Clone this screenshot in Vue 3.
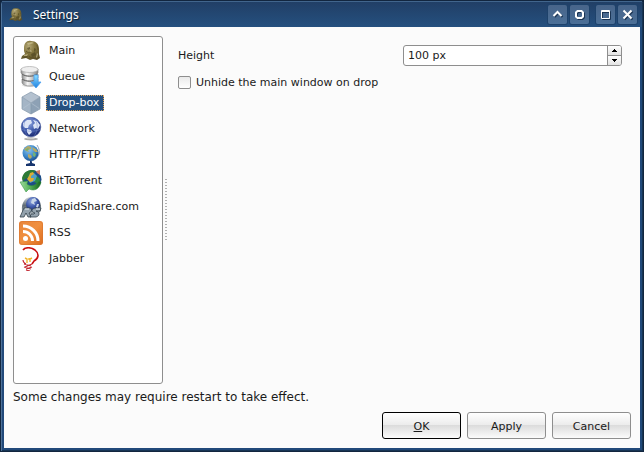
<script setup>
import { ref } from 'vue'

const pages = [
  { id: 'main', label: 'Main' },
  { id: 'queue', label: 'Queue' },
  { id: 'dropbox', label: 'Drop-box' },
  { id: 'network', label: 'Network' },
  { id: 'http', label: 'HTTP/FTP' },
  { id: 'torrent', label: 'BitTorrent' },
  { id: 'rapid', label: 'RapidShare.com' },
  { id: 'rss', label: 'RSS' },
  { id: 'jabber', label: 'Jabber' },
]
const current = ref('dropbox')
const height = ref(100)
const unhide = ref(false)
</script>

<template>
  <div class="window">
    <svg class="defs" width="0" height="0" aria-hidden="true">
      <defs>
        <radialGradient id="bronze" cx=".4" cy=".3" r=".75">
          <stop offset="0" stop-color="#b3a777" /><stop offset=".45" stop-color="#85773f" /><stop offset="1" stop-color="#5a4e25" />
        </radialGradient>
        <linearGradient id="disk"><stop offset="0" stop-color="#8d8d8d" /><stop offset=".35" stop-color="#f6f6f6" /><stop offset="1" stop-color="#858585" /></linearGradient>
        <linearGradient id="arrow" x2="0" y2="1"><stop offset="0" stop-color="#8fe0ff" /><stop offset="1" stop-color="#1b7fe0" /></linearGradient>
        <linearGradient id="leaf" x2="1" y2="0"><stop offset="0" stop-color="#9fdc9f" /><stop offset=".45" stop-color="#58b45a" /><stop offset="1" stop-color="#14641f" /></linearGradient>
        <radialGradient id="navy" cx=".4" cy=".3" r=".7"><stop offset="0" stop-color="#8fa6e0" /><stop offset=".6" stop-color="#3d57a8" /><stop offset="1" stop-color="#1c2a70" /></radialGradient>
        <radialGradient id="sea" cx=".4" cy=".3" r=".75"><stop offset="0" stop-color="#8cc4ee" /><stop offset=".6" stop-color="#3a86c8" /><stop offset="1" stop-color="#1a4b8c" /></radialGradient>
        <linearGradient id="orange" x2="1" y2="1"><stop offset="0" stop-color="#e8853a" /><stop offset=".5" stop-color="#f09040" /><stop offset="1" stop-color="#dc6a1c" /></linearGradient>
        <linearGradient id="chrome" x2="0" y2="1"><stop offset="0" stop-color="#d9dee2" /><stop offset=".5" stop-color="#5f6b74" /><stop offset="1" stop-color="#a9b4bb" /></linearGradient>
        <symbol id="i-main" viewBox="0 0 24 24">
          <path fill="url(#bronze)" d="M5 9C5 4 8 1 12 2c5 0 8 3 8 8v5l1 4-3 2-4-1-3 1-4-2-5 1 1-3 3-2-1-3z" />
          <path fill="#4b421f" opacity=".6" d="M8 9l3-1 0 2-2 1zM15 9l2 1-1 3-1-1zM12 15l4-2 1 3-4 2zM4 18l4-1 1 1-4 1z" />
          <path fill="#cfc496" opacity=".7" d="M8 4l5-1 2 1-6 2zM18 14l1 1-1 4-1-1zM5 16l4-1-1 2-3 0zM11 11l2 1-2 2z" />
          <path fill="none" stroke="#5b5027" stroke-width=".8" d="M7 12c2 2 3 2 5 1m-2 4c1 2 3 2 5 1M18 6l1 5" />
        </symbol>
        <symbol id="i-queue" viewBox="0 0 24 24">
          <ellipse cx="11" cy="20" rx="8" ry="2" fill="#aaa" opacity=".4" />
          <g fill="url(#disk)" stroke="#8b8b8b" stroke-width=".7">
            <path d="M3 14v4c2 4 14 4 16 0v-4z" /><path d="M3 9v4c2 4 14 4 16 0V9z" /><path d="M2 4v4c2 4 15 4 17 0V4z" />
          </g>
          <ellipse cx="10.500" cy="4.500" rx="8.500" ry="3" fill="#eee" stroke="#aaa" stroke-width=".7" />
          <path d="M3 9c4 3 11 3 15 0M3 14c4 3 11 3 15 0" fill="none" stroke="#666" />
          <path d="M15 10h4v7h3l-5 6-5-6h3z" fill="url(#arrow)" stroke="#4a9ff0" stroke-width=".8" />
        </symbol>
        <symbol id="i-dropbox" viewBox="0 0 24 24">
          <path d="M12 1l9 5-9 6-9-6z" fill="#b4c1cf" /><path d="M3 6l9 6v11l-9-5z" fill="#a4b5c6" /><path d="M21 6l-9 6v11l9-5z" fill="#8da1b5" />
          <path d="M3 18l9-6 9 6M12 1v11" fill="none" stroke="#b7c6d3" stroke-width=".6" />
          <path d="M12 1l9 5v12l-9 5-9-5V6zM3 6l9 6 9-6M12 12v11" fill="none" stroke="#8598aa" stroke-width=".7" />
        </symbol>
        <symbol id="i-network" viewBox="0 0 24 24">
          <ellipse cx="12" cy="22" rx="7" ry="1.500" fill="#aaa" /><path d="M9 20h5l2 2H7z" fill="#ccc" />
          <circle cx="12" cy="10" r="9.800" fill="url(#navy)" stroke="#40549a" stroke-width=".6" />
          <path fill="#dde5f6" d="M4 6l4-3 4 0 1 3-3 2-1 3-3 0-2-2zM14 3l4 1 3 4-2 4-2-1-2 1-1-4 2-2zM8 12l4 1 1 2-3 3-2-3z" />
          <path d="M4 5c4-4 12-4 16 0M2 12c6 3 14 3 20 0M7 2C3 9 5 15 9 19M16 2c4 7 2 13-1 17" fill="none" stroke="#7188c8" stroke-width=".5" />
        </symbol>
        <symbol id="i-http" viewBox="0 0 24 24">
          <path d="M11 17h2l0 3 3 1v2H7v-2l4-1z" fill="#17356e" /><path d="M18 2c5 7 1 15-6 16" fill="none" stroke="#95a9bd" />
          <circle cx="11.500" cy="10" r="8" fill="url(#sea)" />
          <path fill="#b5a866" d="M5 6l4-3 3 1 0 2-3 1 1 2-3-1zM13 4l4 2 2 3-3 0-2-2zM9 11l3 1 1 2-2 2-2-2z" />
          <path fill="#73b277" d="M6 7l3-2 1 1-2 2zM14 9l3 2-1 3-2-1z" />
        </symbol>
        <symbol id="i-torrent" viewBox="0 0 24 24">
          <circle cx="13" cy="10.500" r="9.500" fill="#1d4c86" />
          <path d="M3 9C5 1 13 0 17 2l-4 3-4 4-3 1-2 3z" fill="#2d7a36" />
          <path d="M17 6l4 4-1 5-5-2z" fill="#2a8b46" />
          <path d="M10 6l5-2 3 3-2 5-5 2-2-4z" fill="#4f9fc8" />
          <path d="M11 4l3-1 1 2-3 2 0 2 3 0-1 3-3 1-3-3 2-3z" fill="#dcae34" />
          <path d="M17 2l4-1 0 5-3-2z" fill="#d07a62" />
          <path d="M1 13l8-1-1 3c4 3 8 2 12-3l2 1c-1 6-6 10-12 7l-3 3z" fill="url(#leaf)" stroke="#2d8a3a" stroke-width=".5" />
        </symbol>
        <symbol id="i-rapid" viewBox="0 0 24 24">
          <path d="M3 16C2 6 8 1 14 2c6 0 9 6 8 14l-3 3H5z" fill="url(#chrome)" /><circle cx="14" cy="9" r="7" fill="url(#navy)" />
          <path d="M13 4l3-1 2 3-3 1 1 3-4-2zM18 9l2 0-1 4-2-1z" fill="#cad7e8" />
          <path d="M1 22l4-9h6c2 1 2 4-1 5l2 4H9l-2-4-2 4zM22 13h-6c-4 1-4 4 0 5l-1 1h-3l-1 3h6c4-1 4-5 0-6h4z" fill="#93a2ad" stroke="#34424d" stroke-width=".8" />
          <path d="M6 14h4M17 14h4" stroke="#e3eaef" />
        </symbol>
        <symbol id="i-rss" viewBox="0 0 24 24">
          <rect width="24" height="24" rx="3" fill="url(#orange)" /><rect x=".5" y=".5" width="23" height="23" rx="3" fill="none" stroke="#d8742e" stroke-opacity=".6" />
          <circle cx="6.500" cy="17.500" r="2.500" fill="#fff" />
          <path d="M4 10.500a9.500 9.500 0 0 1 9.500 9.500M4 5a15 15 0 0 1 15 15" fill="none" stroke="#fff" stroke-width="3" />
        </symbol>
        <symbol id="i-jabber" viewBox="0 0 24 24">
          <path d="M4 3C6 0 12 0 16 3c5 4 3 9-1 11l-2 3" fill="none" stroke="#c90d10" stroke-width="1.600" />
          <path d="M4 13c0 2 1 3 3 4M5 17l7 2M5 20l7 2M7 23l4 1M13 17l-7 3M13 20l-6 2" stroke="#c32731" fill="none" stroke-width="1.100" />
          <path d="M6 11l2 1v4M13 11l-2 1 0 3M10 11v2" stroke="#f1b52d" stroke-width="1.400" fill="none" />
        </symbol>
      </defs>
    </svg>

    <header class="titlebar">
      <svg class="app-icon" aria-hidden="true"><use href="#i-main" /></svg>
      <h1>Settings</h1>
      <div class="controls">
        <button type="button" aria-label="Shade"><svg viewBox="0 0 19 19"><path d="M5.500 11l4-4 4 4" /></svg></button>
        <button type="button" aria-label="Help"><svg viewBox="0 0 19 19"><path d="M7.500 6h4L13 7.500v4L11.500 13h-4L6 11.500v-4z" /></svg></button>
        <button type="button" class="spaced" aria-label="Maximize"><svg viewBox="0 0 19 19"><path class="thin" d="M5.500 5.500h8v8h-8zM5 6.500h9" /></svg></button>
        <button type="button" aria-label="Close"><svg viewBox="0 0 19 19"><path d="M5.500 5.500l8 8M13.500 5.500l-8 8" /></svg></button>
      </div>
    </header>

    <form class="body" @submit.prevent>
      <div class="panes">
        <nav class="list">
          <button
            v-for="p in pages" :key="p.id" type="button" class="item"
            :class="{ selected: p.id === current }" @click="current = p.id"
          >
            <svg class="icon" aria-hidden="true"><use :href="'#i-' + p.id" /></svg>
            <span>{{ p.label }}</span>
          </button>
        </nav>
        <div class="splitter"></div>
        <section class="form">
          <div class="row">
            <label for="height">Height</label>
            <div class="spin">
              <input id="height" type="text" :value="height + ' px'" @change="height = parseInt($event.target.value) || 0">
              <div class="steps">
                <button type="button" aria-label="Increase" @click="height++"><svg viewBox="0 0 5 3"><path d="M0 3h5V2H4V1H3V0H2v1H1v1H0z" /></svg></button>
                <button type="button" aria-label="Decrease" @click="height--"><svg viewBox="0 0 5 3"><path d="M0 0h5v1H4v1H3v1H2V2H1V1H0z" /></svg></button>
              </div>
            </div>
          </div>
          <label class="check"><input v-model="unhide" type="checkbox">Unhide the main window on drop</label>
        </section>
      </div>
      <p class="note">Some changes may require restart to take effect.</p>
      <div class="actions">
        <button type="submit" class="default"><u>O</u>K</button>
        <button type="button">Apply</button>
        <button type="button">Cancel</button>
      </div>
    </form>
  </div>
</template>

<style>
body { background: #12243c; }
</style>

<style scoped>
.window {
  box-sizing: border-box;
  min-height: 100vh;
  display: flex;
  flex-direction: column;
  padding: 0 3px 3px;
  border: 1px solid #12263f;
  border-radius: 4px 4px 0 0;
  background: #21497a;
  box-shadow: inset 1px 1px #4d7198, inset -1px -1px #173554;
  font: 11px/14px "DejaVu Sans", sans-serif;
  color: #1a1a1a;
}
.defs { position: absolute; }
button, input { font: inherit; color: inherit; margin: 0; }
.titlebar {
  display: flex;
  align-items: center;
  height: 26px;
  margin: 0 -2px;
  padding: 0 5px 0 6px;
  background: linear-gradient(#213f66, #25507f);
  border-top: 1px solid #41658c;
  box-sizing: border-box;
}
.app-icon { width: 16px; height: 16px; }
h1 {
  flex: 1;
  margin: 0 0 0 9px;
  font: 12px/16px "Noto Sans", sans-serif;
  color: #fff;
  text-shadow: 1px 1px 1px #0a1a2c;
}
.controls { display: flex; gap: 3px; }
.controls button {
  width: 19px;
  height: 19px;
  padding: 0;
  border: 0;
  border-radius: 2px;
  background: linear-gradient(#48658a, #4b6f97);
  box-shadow: 0 0 0 1px #1e426b;
}
.controls .spaced { margin-left: 4px; }
.controls svg { display: block; fill: none; stroke: #fff; stroke-width: 2; filter: drop-shadow(1px 1px 0 #1b3453); }
.controls .thin { stroke-width: 1; }
.body {
  flex: 1;
  display: flex;
  flex-direction: column;
  padding: 9px;
  background: #fbfbfb;
}
.panes { flex: 1; display: flex; }
.list {
  width: 150px;
  box-sizing: border-box;
  padding: 1px 5px;
  border: 1px solid #8e8e8e;
  border-radius: 3px;
  background: #fff;
}
.item {
  display: flex;
  align-items: center;
  gap: 3px;
  width: 100%;
  height: 26px;
  padding: 0;
  border: 0;
  background: none;
  text-align: left;
  white-space: nowrap;
}
.icon { width: 24px; height: 24px; flex: none; }
.item span { padding: 0 4px 0 2px; border: 1px solid transparent; }
.item.selected span { background: #25507f; border: 1px dotted #e2a65c; color: #fff; }
.splitter {
  align-self: center;
  width: 2px;
  height: 62px;
  margin: 0 11px 0 2px;
  background: repeating-linear-gradient(#b0b0b0 0 1px, transparent 1px 3px);
}
.form { flex: 1; padding: 9px 9px 0 0; }
.row { display: grid; grid-template-columns: 1fr 1fr; gap: 6px; align-items: center; }
.spin {
  display: flex;
  height: 21px;
  box-sizing: border-box;
  border: 1px solid #8e8e8e;
  border-radius: 3px;
  background: #fff;
  overflow: hidden;
}
.spin input { flex: 1; min-width: 0; padding: 0 4px; border: 0; outline: 0; background: none; }
.steps { display: flex; flex-direction: column; width: 13px; border-left: 1px solid #8e8e8e; }
.steps button {
  flex: 1;
  display: flex;
  align-items: center;
  justify-content: center;
  padding: 0;
  border: 0;
  background: linear-gradient(#fff, #e2e2e2);
}
.steps button + button { border-top: 1px solid #8e8e8e; }
.steps svg { width: 5px; height: 3px; }
.check { display: flex; align-items: center; gap: 5px; margin-top: 9px; line-height: 15px; }
.check input {
  appearance: none;
  box-sizing: border-box;
  width: 13px;
  height: 13px;
  border: 1px solid #8e8e8e;
  border-radius: 2px;
  background: linear-gradient(#eaeaea, #fff);
}
.check input:checked { background: #25507f; }
.note { margin: 6px 0 8px; font-size: 12px; }
.actions { display: flex; justify-content: flex-end; gap: 6px; }
.actions button {
  width: 79px;
  height: 27px;
  padding: 2px 0 0;
  border: 1px solid #8e8e8e;
  border-radius: 3px;
  background: linear-gradient(#fff, #ebebeb 50%, #dcdcdc 50%, #fbfbfb);
}
.actions .default { border-color: #000; }
</style>
